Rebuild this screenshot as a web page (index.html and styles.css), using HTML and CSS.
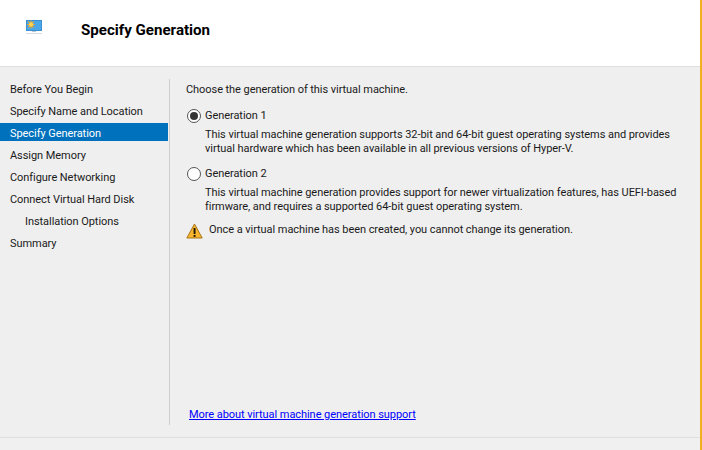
FILE: index.html
```html
<!DOCTYPE html>
<html lang="en">
<head>
<meta charset="utf-8">
<title>Specify Generation</title>
<link rel="stylesheet" href="styles.css">
</head>
<body>
<div class="window">
  <header class="header">
    <svg class="header-icon" width="16" height="14" viewBox="0 0 16 14">
      <rect x="0.5" y="0.5" width="15" height="10" fill="#4aa8e8" stroke="#3a90d0" stroke-width="1"/>
      <g stroke="#f0a020" stroke-width="1.1">
        <path d="M5 0.5v8M1 4.5h8M2.2 1.7l5.6 5.6M7.8 1.7l-5.6 5.6"/>
      </g>
      <circle cx="5" cy="4.5" r="2.2" fill="#fcd24f"/>
      <rect x="6" y="11" width="4" height="1" fill="#b9c6d2"/>
      <rect x="0" y="13" width="16" height="1" fill="#d8dde2"/>
    </svg>
    <h1 class="title">Specify Generation</h1>
  </header>
  <main class="main">
    <nav class="nav">
      <div class="nav-item">Before You Begin</div>
      <div class="nav-item">Specify Name and Location</div>
      <div class="nav-item selected">Specify Generation</div>
      <div class="nav-item">Assign Memory</div>
      <div class="nav-item">Configure Networking</div>
      <div class="nav-item">Connect Virtual Hard Disk</div>
      <div class="nav-item sub">Installation Options</div>
      <div class="nav-item">Summary</div>
    </nav>
    <section class="content">
      <div class="body">
        <p class="intro">Choose the generation of this virtual machine.</p>
        <div class="option">
          <div class="radio-row"><span class="radio checked"></span><span>Generation 1</span></div>
          <p class="desc">This virtual machine generation supports 32-bit and 64-bit guest operating systems and provides<br>virtual hardware which has been available in all previous versions of Hyper-V.</p>
        </div>
        <div class="option">
          <div class="radio-row"><span class="radio"></span><span>Generation 2</span></div>
          <p class="desc">This virtual machine generation provides support for newer virtualization features, has UEFI-based<br>firmware, and requires a supported 64-bit guest operating system.</p>
        </div>
        <div class="warning">
          <svg class="warn-icon" width="17" height="16" viewBox="0 0 17 16">
            <path d="M8.5 1 L16.2 15 H0.8 Z" fill="#f6b52c" stroke="#a8741a" stroke-width="1" stroke-linejoin="round"/>
            <rect x="7.6" y="5" width="1.9" height="6" fill="#1d1607"/>
            <rect x="7.6" y="12" width="1.9" height="1.9" fill="#1d1607"/>
          </svg>
          <span>Once a virtual machine has been created, you cannot change its generation.</span>
        </div>
      </div>
      <a class="more" href="#">More about virtual machine generation support</a>
    </section>
  </main>
  <footer class="footer"></footer>
</div>
</body>
</html>
```
FILE: styles.css
```css
html, body {
  margin: 0;
  padding: 0;
}
body {
  width: 702px;
  height: 450px;
  overflow: hidden;
  font-family: Roboto, "Noto Sans", sans-serif;
  font-size: 11px;
  letter-spacing: -0.06px;
  color: #1a1a1a;
  background: #f0f0f0;
}
.window {
  box-sizing: border-box;
  width: 702px;
  height: 450px;
  display: flex;
  flex-direction: column;
  border-right: 2px solid #f2b01e;
}
.header {
  box-sizing: border-box;
  height: 67px;
  flex: none;
  display: flex;
  align-items: center;
  background: #fff;
  border-bottom: 1px solid #dfdfdf;
  padding: 0 0 6px 26px;
}
.header-icon {
  flex: none;
  margin-right: 39px;
  margin-top: -6px;
}
.title {
  margin: 0;
  font-size: 15.1px;
  font-weight: 700;
  letter-spacing: 0;
  color: #000;
}
.main {
  flex: 1;
  display: flex;
  min-height: 0;
  background: #efefef;
  padding-top: 12px;
}
.nav {
  box-sizing: border-box;
  width: 168px;
  flex: none;
}
.nav-item {
  box-sizing: border-box;
  height: 18px;
  line-height: 18px;
  margin-bottom: 4px;
  padding: 2px 0 0 10px;
  white-space: nowrap;
}
.nav-item.selected {
  background: #0071bc;
  color: #fff;
}
.nav-item.sub {
  padding-left: 25px;
}
.content {
  flex: none;
  width: 530px;
  height: 346px;
  margin-left: 1px;
  border-left: 1px solid #cfcfcf;
  display: flex;
  flex-direction: column;
  justify-content: space-between;
  padding-left: 16px;
  box-sizing: border-box;
}
.intro {
  margin: 3px 0 0;
  line-height: 16px;
}
.option {
  margin-top: 8px;
}
.option + .option {
  margin-top: 9px;
}
.radio-row {
  display: flex;
  align-items: center;
  gap: 4px;
  height: 20px;
  line-height: 20px;
}
.radio {
  box-sizing: border-box;
  flex: none;
  width: 14px;
  height: 14px;
  border: 1px solid #555;
  border-radius: 50%;
  background: #fff;
  margin-left: 1px;
  display: flex;
  align-items: center;
  justify-content: center;
}
.radio.checked::after {
  content: "";
  width: 8px;
  height: 8px;
  border-radius: 50%;
  background: #333;
}
.desc {
  margin: 2px 0 0 19px;
  line-height: 13.5px;
  white-space: nowrap;
}
.warning {
  display: flex;
  align-items: center;
  gap: 6px;
  margin-top: 7px;
  height: 18px;
}
.warn-icon {
  flex: none;
  margin-top: 3px;
}
.more {
  align-self: flex-start;
  margin: 0 0 2px 3px;
  color: #0000ff;
  text-decoration: underline;
  line-height: 16px;
}
.footer {
  box-sizing: border-box;
  height: 13px;
  flex: none;
  background: #f0f0f0;
  border-top: 1px solid #dfdfdf;
}
```
